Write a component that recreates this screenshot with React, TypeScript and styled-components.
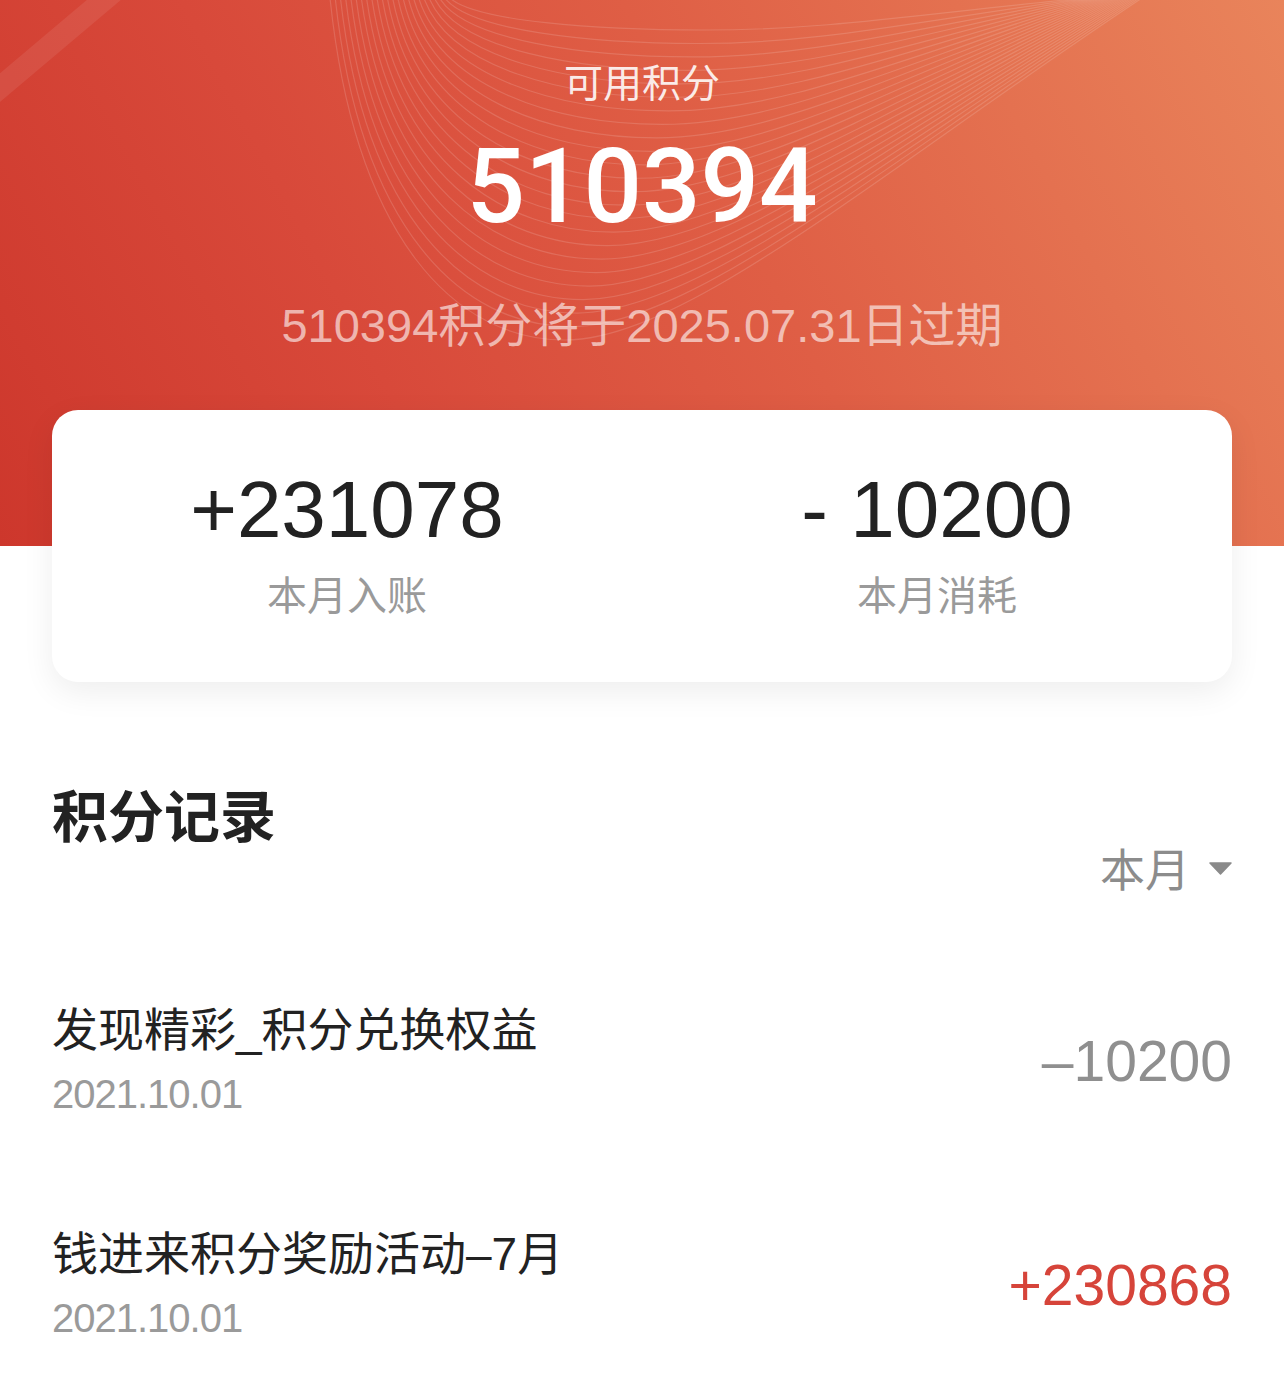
import styled, { createGlobalStyle } from "styled-components";

const GlobalStyle = createGlobalStyle`
  body {
    margin: 0;
    background: #ffffff;
    font-family: "Liberation Sans", "Noto Sans CJK SC", sans-serif;
    -webkit-font-smoothing: antialiased;
  }
`;

// ページ全体
const Page = styled.div`
  width: 1284px;
  min-height: 1389px;
  background: #ffffff;
  overflow: hidden;
`;

// 上部の赤いヘッダー
const Hero = styled.header`
  position: relative;
  height: 546px;
  overflow: hidden;
  text-align: center;
  background: linear-gradient(62deg, #cd372c 0%, #d8493a 30%, #df5e45 58%, #e9845b 100%);
`;

// 背景の曲線
const Waves = styled.svg`
  position: absolute;
  inset: 0;
  pointer-events: none;
`;

const HeroBody = styled.div`
  position: relative;
  z-index: 1;
  display: flex;
  flex-direction: column;
  align-items: center;
  padding-top: 64px;
`;

const HeroLabel = styled.div`
  font-size: 39px;
  line-height: 40px;
  color: rgba(255, 255, 255, 0.88);
`;

const Balance = styled.div`
  margin-top: 31px;
  font-family: Roboto, "Liberation Sans", sans-serif;
  font-weight: 500;
  font-size: 103px;
  line-height: 1;
  color: #ffffff;
`;

const Expire = styled.div`
  margin-top: 63px;
  font-size: 47px;
  line-height: 50px;
  color: rgba(255, 255, 255, 0.6);
`;

// 今月の集計カード
const SummaryCard = styled.section`
  position: relative;
  z-index: 2;
  margin: -136px 52px 0;
  height: 272px;
  box-sizing: border-box;
  padding-top: 60px;
  display: grid;
  grid-template-columns: 1fr 1fr;
  background: #ffffff;
  border-radius: 26px;
  box-shadow: 0 10px 32px rgba(0, 0, 0, 0.07);
`;

const Stat = styled.div`
  display: flex;
  flex-direction: column;
  align-items: center;
`;

const StatValue = styled.div`
  font-size: 80px;
  line-height: 1;
  color: #222222;
`;

const StatLabel = styled.div`
  margin-top: 24px;
  font-size: 40px;
  line-height: 44px;
  color: #9a9a9a;
`;

// 積分記録
const Records = styled.section`
  padding: 100px 52px 0;
`;

const SectionTitle = styled.h2`
  margin: 0;
  font-family: "Noto Sans CJK SC", sans-serif;
  font-weight: 700;
  font-size: 56px;
  line-height: 62px;
  color: #222222;
`;

const FilterBar = styled.div`
  display: flex;
  justify-content: flex-end;
`;

const Filter = styled.button`
  display: flex;
  align-items: center;
  gap: 19px;
  padding: 0;
  border: none;
  background: none;
  font-family: "Noto Sans CJK SC", sans-serif;
  font-size: 45px;
  line-height: 48px;
  color: #8c8c8c;
  cursor: pointer;
`;

const List = styled.ul`
  list-style: none;
  margin: 114px 0 0;
  padding: 0;
  display: flex;
  flex-direction: column;
  gap: 114px;
`;

const Row = styled.li`
  display: flex;
  align-items: center;
  justify-content: space-between;
`;

const RowText = styled.div`
  display: flex;
  flex-direction: column;
`;

const RowTitle = styled.div`
  font-size: 46px;
  line-height: 48px;
  color: #222222;
`;

const RowDate = styled.div`
  margin-top: 18px;
  font-size: 40px;
  line-height: 44px;
  letter-spacing: -1px;
  color: #9a9a9a;
`;

const Amount = styled.div<{ $income?: boolean }>`
  font-size: 57px;
  line-height: 1;
  color: ${(p) => (p.$income ? "#d6443a" : "#8f8f8f")};
`;

// 曲線のパスを生成
const wavePaths = Array.from({ length: 24 }, (_, i) => {
  const u = i / 23;
  const x0 = 330 + 120 * u;
  const ym = 340 - 310 * u;
  const xm = 565 + 140 * u;
  const x1 = 1142 - 58 * u;
  return `M ${x0} -2 C ${x0 + 25} ${ym * 0.7} ${xm - 110} ${ym} ${xm} ${ym} C ${
    xm + 120
  } ${ym} ${x1 - (x1 - xm) * 0.45} ${ym * 0.5} ${x1} -2`;
});

const records = [
  { title: "发现精彩_积分兑换权益", date: "2021.10.01", amount: "–10200", income: false },
  { title: "钱进来积分奖励活动–7月", date: "2021.10.01", amount: "+230868", income: true },
];

const App = () => {
  return (
    <Page>
      <GlobalStyle />
      <Hero>
        <Waves width="1284" height="546" viewBox="0 0 1284 546">
          <line
            x1="-10"
            y1="96"
            x2="118"
            y2="-12"
            stroke="#ffffff"
            strokeOpacity="0.08"
            strokeWidth="22"
          />
          {wavePaths.map((d, i) => (
            <path
              key={i}
              d={d}
              fill="none"
              stroke="#ffffff"
              strokeOpacity="0.14"
              strokeWidth="1.2"
            />
          ))}
        </Waves>
        <HeroBody>
          <HeroLabel>可用积分</HeroLabel>
          <Balance>510394</Balance>
          <Expire>510394积分将于2025.07.31日过期</Expire>
        </HeroBody>
      </Hero>

      <SummaryCard>
        <Stat>
          <StatValue>+231078</StatValue>
          <StatLabel>本月入账</StatLabel>
        </Stat>
        <Stat>
          <StatValue>- 10200</StatValue>
          <StatLabel>本月消耗</StatLabel>
        </Stat>
      </SummaryCard>

      <Records>
        <SectionTitle>积分记录</SectionTitle>
        <FilterBar>
          <Filter>
            本月
            <svg width="23" height="13" viewBox="0 0 23 13">
              <path
                d="M1 1 L22 1 L11.5 12 Z"
                fill="#8a8a8a"
                stroke="#8a8a8a"
                strokeLinejoin="round"
                strokeWidth="1.5"
              />
            </svg>
          </Filter>
        </FilterBar>
        <List>
          {records.map((r) => (
            <Row key={r.title}>
              <RowText>
                <RowTitle>{r.title}</RowTitle>
                <RowDate>{r.date}</RowDate>
              </RowText>
              <Amount $income={r.income}>{r.amount}</Amount>
            </Row>
          ))}
        </List>
      </Records>
    </Page>
  );
};

export default App;
